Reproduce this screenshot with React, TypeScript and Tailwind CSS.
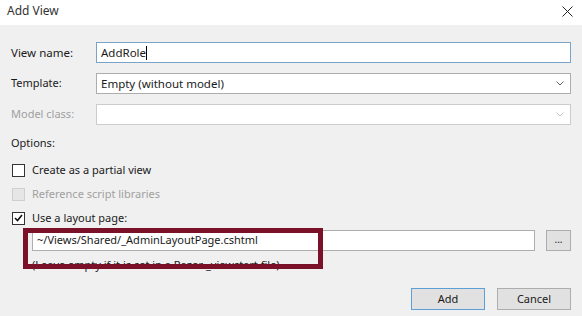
export default function App() {
  const font = { fontFamily: '"Noto Sans", "Open Sans", sans-serif' };
  return (
    <div className="relative w-[582px] h-[316px] overflow-hidden bg-[#f0f0f0] text-[11px] text-[#1a1a1a]" style={font}>
      {/* title bar */}
      <div className="h-[25px] bg-white flex items-center justify-between pl-[7px] pr-[9px]">
        <span className="text-[#333] text-[12px] leading-none -mt-[4px]">Add View</span>
        <svg width="11" height="11" viewBox="0 0 11 11" className="-mt-[3px]">
          <path d="M0.5 0.5L10.5 10.5M10.5 0.5L0.5 10.5" stroke="#222" strokeWidth="1" />
        </svg>
      </div>

      <div className="px-[11px] pt-[17px]">
        <div className="flex items-center h-[21px]">
          <label className="w-[85px] text-[11.5px]">View name:</label>
          <div className="flex-1 h-[21px] bg-white border border-[#7aa3c8] flex items-center pl-[4px] text-[11.5px]">
            AddRole<span className="inline-block w-px h-[14px] bg-black"></span>
          </div>
        </div>
        <div className="flex items-center h-[21px] mt-[10px]">
          <label className="w-[85px]">Template:</label>
          <div className="flex-1 h-[21px] bg-white border border-[#adadad] flex items-center justify-between pl-[4px] pr-[6px] text-[11.5px]">
            <span>Empty (without model)</span>
            <svg width="8" height="5" viewBox="0 0 8 5">
              <path d="M0.5 0.5L4 4L7.5 0.5" stroke="#606060" fill="none" />
            </svg>
          </div>
        </div>
        <div className="flex items-center h-[21px] mt-[10px]">
          <label className="w-[85px] text-[#a0a0a0]">Model class:</label>
          <div className="flex-1 h-[21px] bg-white border border-[#cccccc] flex items-center justify-end pr-[6px]">
            <svg width="8" height="5" viewBox="0 0 8 5">
              <path d="M0.5 0.5L4 4L7.5 0.5" stroke="#c4c4c4" fill="none" />
            </svg>
          </div>
        </div>

        <div className="mt-[10px] h-[16px] leading-[16px]">Options:</div>

        <div className="mt-[11px] h-[16px] flex items-center gap-[7px] pl-px">
          <span className="w-[13px] h-[13px] bg-white border border-[#333]"></span>
          <span>Create as a partial view</span>
        </div>
        <div className="mt-[8px] h-[16px] flex items-center gap-[7px] pl-px">
          <span className="w-[13px] h-[13px] bg-[#e6e6e6] border border-[#cfcfcf]"></span>
          <span className="text-[#a0a0a0]">Reference script libraries</span>
        </div>
        <div className="mt-[8px] h-[16px] flex items-center gap-[7px] pl-px">
          <span className="w-[13px] h-[13px] bg-white border border-[#333] flex items-center justify-center">
            <svg width="9" height="8" viewBox="0 0 9 8">
              <path d="M1 4L3.5 6.5L8 1" stroke="#111" strokeWidth="1.6" fill="none" />
            </svg>
          </span>
          <span>Use a layout page:</span>
        </div>

        <div className="mt-[4px] pl-[21px] flex items-center gap-[11px]">
          <div className="flex-1 h-[21px] bg-white border border-[#adadad] flex items-center pl-[4px]">
            ~/Views/Shared/_AdminLayoutPage.cshtml
          </div>
          <button className="w-[25px] h-[21px] bg-[#e1e1e1] border border-[#adadad] text-[10px] leading-none pb-[3px]">...</button>
        </div>
        <div className="mt-[6px] pl-[21px] h-[16px] leading-[16px]">(Leave empty if it is set in a Razor _viewstart file)</div>

        <div className="mt-[15px] flex justify-end gap-[12px]">
          <button className="w-[74px] h-[22px] bg-[#e1e1e1] border border-[#5e9fd8]">Add</button>
          <button className="w-[74px] h-[22px] bg-[#e1e1e1] border border-[#adadad]">Cancel</button>
        </div>
      </div>

      {/* annotation highlight */}
      <div className="absolute left-[23px] top-[228px] w-[300px] h-[41px] border-[5px] border-[#7b1128]"></div>
    </div>
  );
}
